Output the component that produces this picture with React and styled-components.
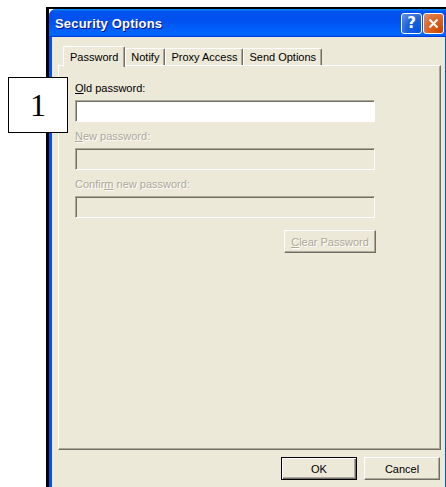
import React from 'react';
import styled, { createGlobalStyle } from 'styled-components';

const GlobalStyle = createGlobalStyle`
  html, body {
    margin: 0;
    padding: 0;
    background: #fff;
    overflow: hidden;
  }
  body {
    font-family: "Liberation Sans", Arial, sans-serif;
  }
`;

const Page = styled.div`
  position: relative;
  width: 446px;
  height: 487px;
  padding: 7px 0 0 46px;
  box-sizing: border-box;
`;

const Frame = styled.div`
  border-top: 2px solid #000;
  border-left: 3px solid #000;
  width: 410px;
  height: 480px;
`;

const Window = styled.div`
  width: 399px;
  height: 100%;
  display: flex;
  flex-direction: column;
  background: #0055e5;
  border-top-left-radius: 7px;
  overflow: hidden;
`;

const TitleBar = styled.div`
  height: 28px;
  flex: none;
  display: flex;
  align-items: center;
  padding: 0 4px 0 6px;
  background: linear-gradient(
    #0997ff 0%,
    #0053ee 8%,
    #0050ee 40%,
    #0066ff 88%,
    #0066ff 93%,
    #005bff 95%,
    #003dd7 96%,
    #003dd7 100%
  );
`;

const Title = styled.span`
  flex: 1;
  color: #fff;
  font-weight: 700;
  font-size: 13px;
  letter-spacing: 0.2px;
  text-shadow: 1px 1px #0f1089;
`;

const CaptionButton = styled.button`
  width: 21px;
  height: 21px;
  margin-left: 1px;
  padding: 0;
  border: 1px solid #fff;
  border-radius: 3px;
  display: flex;
  align-items: center;
  justify-content: center;
  color: #fff;
  font: 700 15px "DejaVu Sans", sans-serif;
  background: ${p => p.$close
    ? 'radial-gradient(circle at 90% 90%, #cc4600 0%, #dc6527 55%, #e28f6a 100%)'
    : 'radial-gradient(circle at 90% 90%, #0054e9 0%, #2263d5 55%, #6696eb 100%)'};
`;

const Body = styled.div`
  flex: 1;
  margin: 0 3px;
  background: #ece9d8;
  padding: 9px 6px 0;
  display: flex;
  flex-direction: column;
`;

const TabStrip = styled.div`
  display: flex;
  align-items: flex-start;
  height: 19px;
  padding-left: 5px;
  position: relative;
  z-index: 1;
`;

const Tab = styled.div`
  box-sizing: border-box;
  height: ${p => (p.$active ? '21px' : '17px')};
  margin-top: ${p => (p.$active ? '0' : '2px')};
  padding: ${p => (p.$active ? '4px 6px 0' : '2px 5px 0')};
  margin-right: ${p => (p.$active ? '0' : '0')};
  font-size: 11px;
  color: #000;
  background: #ece9d8;
  border-top: 1px solid #fff;
  border-left: 1px solid #fff;
  border-right: 1px solid #716f64;
  box-shadow: inset -1px 0 #aca899;
  border-radius: 2px 2px 0 0;
  white-space: nowrap;
`;

const Panel = styled.div`
  box-sizing: border-box;
  width: 383px;
  height: 385px;
  border-top: 1px solid #fff;
  border-left: 1px solid #fff;
  border-right: 1px solid #716f64;
  border-bottom: 1px solid #716f64;
  box-shadow: inset -1px -1px #aca899;
  padding: 16px 0 0 16px;
`;

const Form = styled.div`
  width: 301px;
  display: flex;
  flex-direction: column;
`;

const Label = styled.div`
  font-size: 11px;
  line-height: 13px;
  margin-bottom: 5px;
  color: ${p => (p.$disabled ? '#aca899' : '#000')};
  text-shadow: ${p => (p.$disabled ? '1px 1px #fff' : 'none')};

  u {
    text-decoration-thickness: 1px;
    text-underline-offset: 1px;
  }
`;

const TextBox = styled.div`
  box-sizing: border-box;
  width: 300px;
  height: 22px;
  margin-bottom: 8px;
  background: ${p => (p.$disabled ? '#ece9d8' : '#fff')};
  border-top: 1px solid #aca899;
  border-left: 1px solid #aca899;
  border-right: 1px solid #fff;
  border-bottom: 1px solid #fff;
  box-shadow: inset 1px 1px #716f64;
`;

const Button = styled.div`
  box-sizing: border-box;
  width: ${p => p.$w}px;
  height: 23px;
  display: flex;
  align-items: center;
  justify-content: center;
  font-size: 11px;
  background: #ece9d8;
  color: ${p => (p.$disabled ? '#aca899' : '#000')};
  text-shadow: ${p => (p.$disabled ? '1px 1px #fff' : 'none')};
  border: 1px solid;
  border-color: ${p => (p.$default
    ? '#000'
    : '#fff #716f64 #716f64 #fff')};
  box-shadow: ${p => (p.$default
    ? 'inset 1px 1px #fff, inset -1px -1px #716f64, inset -2px -2px #aca899'
    : 'inset -1px -1px #aca899')};
`;

const ClearButton = styled(Button)`
  align-self: flex-end;
  margin-top: 4px;
`;

const Footer = styled.div`
  display: flex;
  justify-content: flex-end;
  gap: 7px;
  margin-top: 7px;
  width: 382px;
`;

const Callout = styled.div`
  position: absolute;
  left: 8px;
  top: 77px;
  width: 60px;
  height: 56px;
  box-sizing: border-box;
  border: 1.5px solid #000;
  background: #fff;
  display: flex;
  align-items: center;
  justify-content: center;
  font: 32px "Liberation Serif", "Times New Roman", serif;
  color: #000;
  z-index: 2;
`;

const CloseGlyph = () => (
  <svg width="11" height="11" viewBox="0 0 11 11">
    <path d="M1.5 1.5 L9.5 9.5 M9.5 1.5 L1.5 9.5" stroke="#fff" strokeWidth="2" />
  </svg>
);

export default function App() {
  return (
    <>
      <GlobalStyle />
      <Page>
        <Frame>
          <Window>
            <TitleBar>
              <Title>Security Options</Title>
              <CaptionButton>?</CaptionButton>
              <CaptionButton $close><CloseGlyph /></CaptionButton>
            </TitleBar>
            <Body>
              <TabStrip>
                <Tab $active>Password</Tab>
                <Tab>Notify</Tab>
                <Tab>Proxy Access</Tab>
                <Tab>Send Options</Tab>
              </TabStrip>
              <Panel>
                <Form>
                  <Label><u>O</u>ld password:</Label>
                  <TextBox />
                  <Label $disabled><u>N</u>ew password:</Label>
                  <TextBox $disabled />
                  <Label $disabled>Confir<u>m</u> new password:</Label>
                  <TextBox $disabled />
                  <ClearButton $w={92} $disabled><u>C</u>lear Password</ClearButton>
                </Form>
              </Panel>
              <Footer>
                <Button $w={76} $default>OK</Button>
                <Button $w={76}>Cancel</Button>
              </Footer>
            </Body>
          </Window>
        </Frame>
        <Callout>1</Callout>
      </Page>
    </>
  );
}
